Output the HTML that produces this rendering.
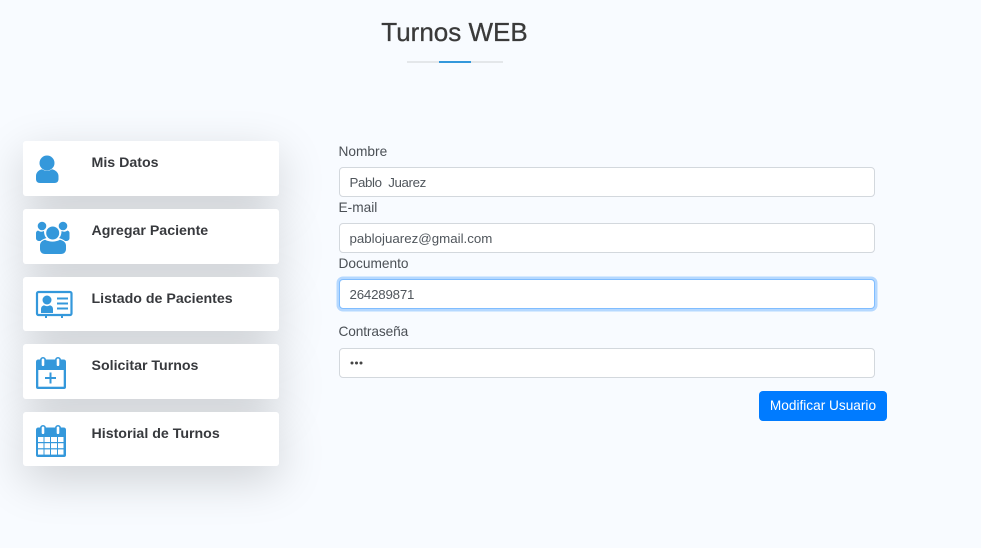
<!DOCTYPE html>
<html lang="es">
<head>
<meta charset="utf-8">
<title>Turnos WEB</title>
<style>
html,body{margin:0;padding:0;width:981px;height:548px;overflow:hidden;background:#f8fbff}
body{position:relative;font-family:"Liberation Sans",sans-serif;color:#444}
.a{position:absolute}
h1{position:absolute;margin:0;left:354.500px;width:200px;top:16px;text-align:center;font-size:26px;line-height:32px;font-weight:400;color:#3a3a3a;-webkit-text-stroke:.3px #3a3a3a}
.sh{position:absolute;left:23px;width:256px;border-radius:3px;box-shadow:0 14px 46px rgba(0,0,0,.17)}
.card{position:absolute;left:23px;width:256px;background:#fff;border-radius:3px}
.card b{position:absolute;left:68.500px;top:13px;font-size:14.2px;line-height:18px;font-weight:700;color:#37393d}
.card svg{position:absolute;left:0;top:0}
label{position:absolute;left:338.500px;font-size:13.7px;line-height:18px;color:#4b5056}
.inp{position:absolute;left:339px;width:534px;height:28px;background:#fff;border:1px solid #d3d8dd;border-radius:4px;font-size:13.3px;line-height:30px;color:#50565c;text-indent:9.500px;white-space:pre}
.focus{border-color:#80bdff;box-shadow:0 0 0 2.500px rgba(0,123,255,.27)}
.btn{position:absolute;left:759px;top:391px;width:128px;height:30px;background:#007bff;border-radius:4px;color:#fff;text-align:center;font-size:13.65px;line-height:30px}
</style>
</head>
<body>
<h1>Turnos WEB</h1>
<div class="a" style="left:407px;top:61px;width:96px;height:1.500px;background:#e4e7ea"></div>
<div class="a" style="left:439px;top:61px;width:32px;height:2px;background:#3498db"></div>

<div class="sh" style="top:141px;height:55px"></div>
<div class="sh" style="top:209px;height:55px"></div>
<div class="sh" style="top:277px;height:54px"></div>
<div class="sh" style="top:344px;height:55px"></div>
<div class="sh" style="top:412px;height:54px"></div>

<div class="card" style="top:141px;height:55px"><b>Mis Datos</b>
<svg width="60" height="55" fill="#3498db"><circle cx="24" cy="22" r="7.500"/><path d="M13 38v-3c0-3.500 2.500-6 6-6.800 3 2 7 2 10 0 3.500.8 6.500 3.300 6.500 6.800v3c0 2.500-1.500 4-4 4H17c-2.500 0-4-1.500-4-4z"/></svg></div>

<div class="card" style="top:209px;height:55px"><b>Agregar Paciente</b>
<svg width="60" height="55" fill="#3498db"><circle cx="19" cy="17" r="4.300"/><circle cx="40" cy="17" r="4.300"/><path d="M15 21.500c2 1.500 4 1.500 6 .5 0 3 1 6 2.500 7-3 1-5 2-6 3h-1c-2 0-3.500-1-3.500-3v-5c0-1 .5-2 2-2.500zM44.500 21.500c-2 1.500-4 1.500-6 .5 0 3-1 6-2.500 7 3 1 5 2 6 3h1c2 0 3.500-1 3.500-3v-5c0-1-.5-2-2-2.500z"/><circle cx="29.700" cy="24" r="6.500"/><path d="M17 40v-3.500c0-3 2-5 5-5.800 5 2.500 10 2.500 15 0 3.500.8 6 2.800 6 5.800V40c0 3-2 5-5 5H22c-3 0-5-2-5-5z"/></svg></div>

<div class="card" style="top:277px;height:54px"><b>Listado de Pacientes</b>
<svg width="60" height="54" fill="#3498db"><rect x="14" y="15" width="34.500" height="23" rx="1.500" fill="none" stroke="#3498db" stroke-width="2.200"/><circle cx="24" cy="23" r="4.500"/><path d="M18 36v-4c0-2 1-3.200 3-3.800 2 1.200 4 1.200 6 0 2 .6 3 1.800 3 3.800v4z"/><rect x="34" y="20.500" width="11" height="2"/><rect x="34" y="25.500" width="11" height="2"/><rect x="34" y="30.500" width="11" height="2"/><rect x="22" y="38" width="2" height="3"/><rect x="38" y="38" width="2" height="3"/></svg></div>

<div class="card" style="top:344px;height:55px"><b>Solicitar Turnos</b>
<svg width="60" height="55" fill="#3498db"><path d="M13 18q0-2.500 2.500-2.500h25q2.500 0 2.500 2.500v25q0 2-2 2H15q-2 0-2-2z"/><rect x="15.300" y="26" width="25.400" height="16.700" fill="#fff"/><rect x="17" y="13" width="6" height="10.500" rx="3"/><rect x="32" y="13" width="6" height="10.500" rx="3"/><rect x="18.700" y="14.500" width="2.600" height="7.500" rx="1.300" fill="#fff"/><rect x="33.700" y="14.500" width="2.600" height="7.500" rx="1.300" fill="#fff"/><rect x="22" y="33" width="11" height="2"/><rect x="26.500" y="28.500" width="2" height="11"/></svg></div>

<div class="card" style="top:412px;height:54px"><b>Historial de Turnos</b>
<svg width="60" height="54" fill="#3498db"><path d="M13 18q0-2.500 2.500-2.500h25q2.500 0 2.500 2.500v25q0 2-2 2H15q-2 0-2-2z"/><rect x="17" y="13" width="6" height="10.500" rx="3"/><rect x="32" y="13" width="6" height="10.500" rx="3"/><rect x="18.700" y="14.500" width="2.600" height="7.500" rx="1.300" fill="#fff"/><rect x="33.700" y="14.500" width="2.600" height="7.500" rx="1.300" fill="#fff"/><g fill="#fff"><rect x="15" y="25" width="5.500" height="5"/><rect x="21.500" y="25" width="5.500" height="5"/><rect x="28" y="25" width="6" height="5"/><rect x="35" y="25" width="5.500" height="5"/><rect x="15" y="31.200" width="5.500" height="5"/><rect x="21.500" y="31.200" width="5.500" height="5"/><rect x="28" y="31.200" width="6" height="5"/><rect x="35" y="31.200" width="5.500" height="5"/><rect x="15" y="37.400" width="5.500" height="5.200"/><rect x="21.500" y="37.400" width="5.500" height="5.200"/><rect x="28" y="37.400" width="6" height="5.200"/><rect x="35" y="37.400" width="5.500" height="5.200"/></g></svg></div>

<label style="top:142.500px">Nombre</label>
<div class="inp" style="top:167px;letter-spacing:-.38px">Pablo  Juarez</div>
<label style="top:198.500px">E-mail</label>
<div class="inp" style="top:223px">pablojuarez@gmail.com</div>
<label style="top:254.500px">Documento</label>
<div class="inp focus" style="top:279px;letter-spacing:-.2px">264289871</div>
<label style="top:323px;letter-spacing:-.12px">Contraseña</label>
<div class="inp" style="top:348px"><svg class="a" style="left:10px;top:12px" width="14" height="4" fill="#444"><circle cx="2" cy="2" r="1.500"/><circle cx="6.500" cy="2" r="1.500"/><circle cx="11" cy="2" r="1.500"/></svg></div>
<div class="btn">Modificar Usuario</div>
</body>
</html>
